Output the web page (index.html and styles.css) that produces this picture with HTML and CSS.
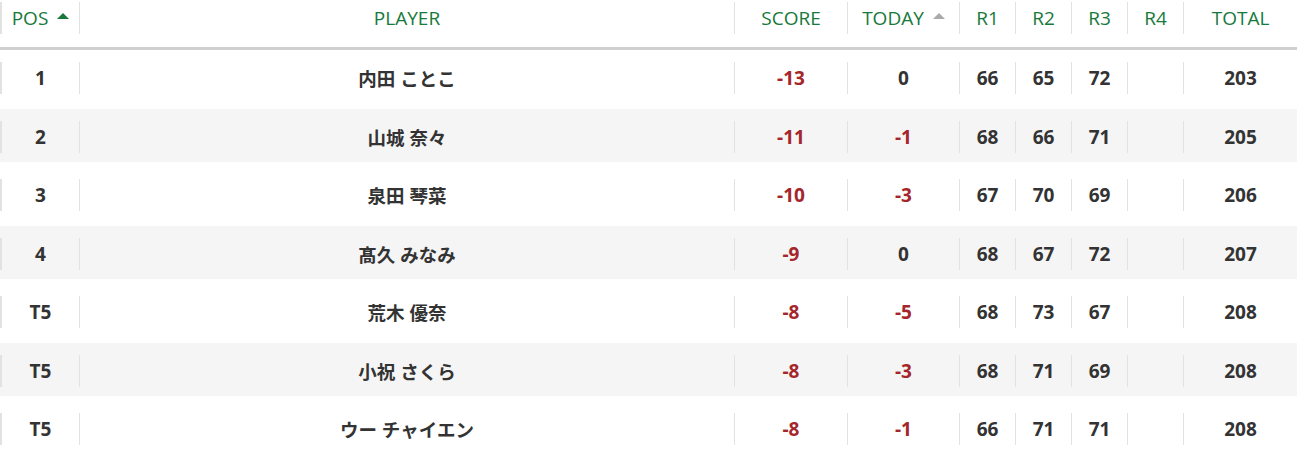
FILE: index.html
```html
<!DOCTYPE html>
<html lang="ja">
<head>
<meta charset="utf-8">
<title>Leaderboard</title>
<link rel="stylesheet" href="styles.css">
</head>
<body>
<div class="board">
  <div class="row head">
    <div class="cell">POS<span class="sort up"></span></div>
    <div class="cell">PLAYER</div>
    <div class="cell">SCORE</div>
    <div class="cell">TODAY<span class="sort idle"></span></div>
    <div class="cell">R1</div>
    <div class="cell">R2</div>
    <div class="cell">R3</div>
    <div class="cell">R4</div>
    <div class="cell">TOTAL</div>
  </div>
  <div class="rows">
    <div class="row">
      <div class="cell">1</div><div class="cell name">内田 ことこ</div><div class="cell neg">-13</div><div class="cell">0</div>
      <div class="cell">66</div><div class="cell">65</div><div class="cell">72</div><div class="cell"></div><div class="cell">203</div>
    </div>
    <div class="row alt">
      <div class="cell">2</div><div class="cell name">山城 奈々</div><div class="cell neg">-11</div><div class="cell neg">-1</div>
      <div class="cell">68</div><div class="cell">66</div><div class="cell">71</div><div class="cell"></div><div class="cell">205</div>
    </div>
    <div class="row">
      <div class="cell">3</div><div class="cell name">泉田 琴菜</div><div class="cell neg">-10</div><div class="cell neg">-3</div>
      <div class="cell">67</div><div class="cell">70</div><div class="cell">69</div><div class="cell"></div><div class="cell">206</div>
    </div>
    <div class="row alt">
      <div class="cell">4</div><div class="cell name">髙久 みなみ</div><div class="cell neg">-9</div><div class="cell">0</div>
      <div class="cell">68</div><div class="cell">67</div><div class="cell">72</div><div class="cell"></div><div class="cell">207</div>
    </div>
    <div class="row">
      <div class="cell">T5</div><div class="cell name">荒木 優奈</div><div class="cell neg">-8</div><div class="cell neg">-5</div>
      <div class="cell">68</div><div class="cell">73</div><div class="cell">67</div><div class="cell"></div><div class="cell">208</div>
    </div>
    <div class="row alt">
      <div class="cell">T5</div><div class="cell name">小祝 さくら</div><div class="cell neg">-8</div><div class="cell neg">-3</div>
      <div class="cell">68</div><div class="cell">71</div><div class="cell">69</div><div class="cell"></div><div class="cell">208</div>
    </div>
    <div class="row">
      <div class="cell">T5</div><div class="cell name">ウー チャイエン</div><div class="cell neg">-8</div><div class="cell neg">-1</div>
      <div class="cell">66</div><div class="cell">71</div><div class="cell">71</div><div class="cell"></div><div class="cell">208</div>
    </div>
  </div>
</div>
</body>
</html>
```

FILE: styles.css
```css
html, body {
  margin: 0;
  padding: 0;
  background: #ffffff;
}

.board {
  width: 1297px;
  font-family: "Open Sans", "Noto Sans CJK JP", sans-serif;
}

.row {
  display: grid;
  grid-template-columns: 79px 655px 113px 112px 56px 56px 56px 56px 1fr;
  height: 53px;
  box-sizing: border-box;
  padding-top: 12px;
}

.cell {
  height: 32px;
  display: flex;
  align-items: center;
  justify-content: center;
  border-left: 1px solid #e2e2e2;
  box-sizing: border-box;
  font-size: 19px;
  font-weight: 700;
  color: #333333;
  white-space: nowrap;
}

.cell:first-child {
  border-left: 2px solid #e2e2e2;
}

.cell.name {
  font-size: 18.5px;
}

.head {
  height: 50px;
  padding-top: 2px;
  border-bottom: 3px solid #d0d0d0;
}

.head .cell {
  font-size: 19px;
  font-weight: 400;
  color: #17793b;
}

.rows {
  display: flex;
  flex-direction: column;
  gap: 5.5px;
}

.alt {
  background: #f5f5f5;
}

.neg {
  color: #a4262b;
}

.sort {
  display: inline-block;
  width: 0;
  height: 0;
  margin-left: 9px;
  margin-bottom: 4px;
  border-left: 6px solid transparent;
  border-right: 6px solid transparent;
  border-bottom: 6px solid #17793b;
}

.sort.idle {
  border-bottom-color: #aaaaaa;
}
```
